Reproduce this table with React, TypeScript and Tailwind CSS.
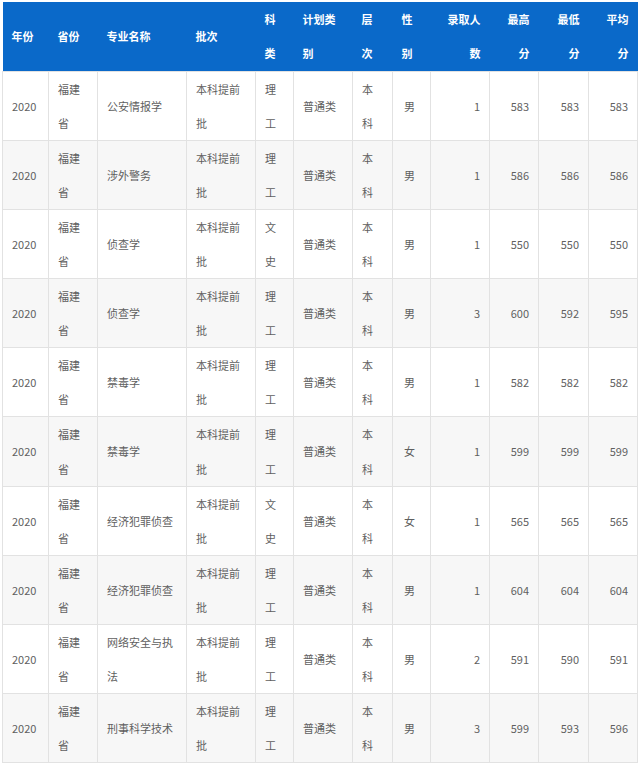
import React from 'react';

type Row = {
  year: string;
  major: string[];
  subject: string[];
  gender: string;
  count: string;
  max: string;
  min: string;
  avg: string;
};

const cols = [46, 49, 89, 69, 38, 59, 40, 38, 59, 49, 50, 49];

const headers: { lines: string[]; right?: boolean }[] = [
  { lines: ['年份'] },
  { lines: ['省份'] },
  { lines: ['专业名称'] },
  { lines: ['批次'] },
  { lines: ['科', '类'] },
  { lines: ['计划类', '别'] },
  { lines: ['层', '次'] },
  { lines: ['性', '别'] },
  { lines: ['录取人', '数'], right: true },
  { lines: ['最高', '分'], right: true },
  { lines: ['最低', '分'], right: true },
  { lines: ['平均', '分'], right: true },
];

const rows: Row[] = [
  { year: '2020', major: ['公安情报学'], subject: ['理', '工'], gender: '男', count: '1', max: '583', min: '583', avg: '583' },
  { year: '2020', major: ['涉外警务'], subject: ['理', '工'], gender: '男', count: '1', max: '586', min: '586', avg: '586' },
  { year: '2020', major: ['侦查学'], subject: ['文', '史'], gender: '男', count: '1', max: '550', min: '550', avg: '550' },
  { year: '2020', major: ['侦查学'], subject: ['理', '工'], gender: '男', count: '3', max: '600', min: '592', avg: '595' },
  { year: '2020', major: ['禁毒学'], subject: ['理', '工'], gender: '男', count: '1', max: '582', min: '582', avg: '582' },
  { year: '2020', major: ['禁毒学'], subject: ['理', '工'], gender: '女', count: '1', max: '599', min: '599', avg: '599' },
  { year: '2020', major: ['经济犯罪侦查'], subject: ['文', '史'], gender: '女', count: '1', max: '565', min: '565', avg: '565' },
  { year: '2020', major: ['经济犯罪侦查'], subject: ['理', '工'], gender: '男', count: '1', max: '604', min: '604', avg: '604' },
  { year: '2020', major: ['网络安全与执', '法'], subject: ['理', '工'], gender: '男', count: '2', max: '591', min: '590', avg: '591' },
  { year: '2020', major: ['刑事科学技术'], subject: ['理', '工'], gender: '男', count: '3', max: '599', min: '593', avg: '596' },
];

const Lines: React.FC<{ lines: string[] }> = ({ lines }) => (
  <>
    {lines.map((l, i) => (
      <React.Fragment key={i}>
        {i > 0 && <br />}
        {l}
      </React.Fragment>
    ))}
  </>
);

const td = 'border border-[#e2e2e2] px-[9px] py-0 align-middle';

export default function App() {
  return (
    <div
      className="w-[640px] h-[769px] bg-white overflow-hidden pt-[2px] pl-[2px]"
      style={{ fontFamily: '"Noto Sans CJK SC", "Noto Sans", sans-serif' }}
    >
      <table className="table-fixed border-collapse w-[635px] text-[11px] leading-[34.1px]">
        <colgroup>
          {cols.map((w, i) => (
            <col key={i} style={{ width: w }} />
          ))}
        </colgroup>
        <thead>
          <tr className="bg-[#0a69c9] text-white font-bold h-[69px]">
            {headers.map((h, i) => (
              <th
                key={i}
                className={`px-[9px] py-0 align-middle font-bold ${h.right ? 'text-right' : 'text-left'}`}
              >
                <Lines lines={h.lines} />
              </th>
            ))}
          </tr>
        </thead>
        <tbody className="text-[#5f5f5f]">
          {rows.map((r, i) => (
            <tr key={i} className={i % 2 === 0 ? 'bg-white' : 'bg-[#f7f7f7]'}>
              <td className={td}>{r.year}</td>
              <td className={td}>
                <Lines lines={['福建', '省']} />
              </td>
              <td className={td}>
                <Lines lines={r.major} />
              </td>
              <td className={td}>
                <Lines lines={['本科提前', '批']} />
              </td>
              <td className={td}>
                <Lines lines={r.subject} />
              </td>
              <td className={td}>普通类</td>
              <td className={td}>
                <Lines lines={['本', '科']} />
              </td>
              <td className={`${td} pl-[11px]`}>{r.gender}</td>
              <td className={`${td} text-right`}>{r.count}</td>
              <td className={`${td} text-right`}>{r.max}</td>
              <td className={`${td} text-right`}>{r.min}</td>
              <td className={`${td} text-right`}>{r.avg}</td>
            </tr>
          ))}
        </tbody>
      </table>
    </div>
  );
}
